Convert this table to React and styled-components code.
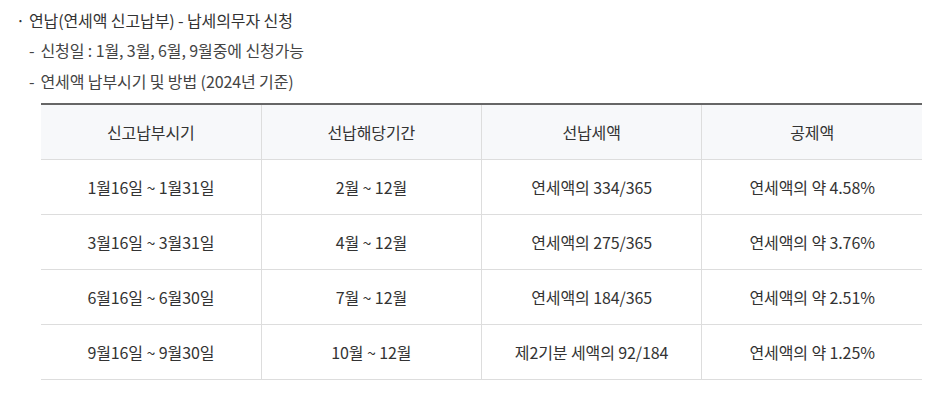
import React from "react";
import styled, { createGlobalStyle } from "styled-components";

const Global = createGlobalStyle`
  html, body { margin: 0; padding: 0; background: #fff; }
  body { font-family: "Noto Sans CJK KR", "Noto Sans", sans-serif; color: #333; }
`;

const Wrap = styled.div`
  padding: 5px 14px 0 16px;
`;

const Title = styled.div`
  display: flex;
  gap: 4px;
  font-size: 16px;
  line-height: 30px;
  color: #333;
  letter-spacing: -0.1px;
`;

const Sub = styled.div`
  display: flex;
  gap: 6px;
  padding-left: 13px;
  font-size: 16px;
  line-height: 31px;
  color: #444;
  letter-spacing: -0.1px;
`;

const Table = styled.table`
  margin: 6px 0 0 25px;
  width: 881px;
  border-collapse: collapse;
  table-layout: fixed;
  border-top: 2px solid #666;
  font-size: 16px;
  letter-spacing: -0.1px;
`;

const Th = styled.th`
  height: 54px;
  padding: 0;
  background: #f7f8fa;
  font-weight: 400;
  color: #333;
  border-bottom: 1px solid #ddd;
  border-left: ${p => (p.first ? "none" : "1px solid #ddd")};
`;

const Td = styled.td`
  height: 54px;
  padding: 0;
  text-align: center;
  color: #333;
  border-bottom: 1px solid #ddd;
  border-left: ${p => (p.first ? "none" : "1px solid #ddd")};
`;

const heads = ["신고납부시기", "선납해당기간", "선납세액", "공제액"];
const rows = [
  ["1월16일 ~ 1월31일", "2월 ~ 12월", "연세액의 334/365", "연세액의 약 4.58%"],
  ["3월16일 ~ 3월31일", "4월 ~ 12월", "연세액의 275/365", "연세액의 약 3.76%"],
  ["6월16일 ~ 6월30일", "7월 ~ 12월", "연세액의 184/365", "연세액의 약 2.51%"],
  ["9월16일 ~ 9월30일", "10월 ~ 12월", "제2기분 세액의 92/184", "연세액의 약 1.25%"],
];

export default function App() {
  return (
    <>
      <Global />
      <Wrap>
        <Title>
          <span>·</span>
          <span>연납(연세액 신고납부) - 납세의무자 신청</span>
        </Title>
        <Sub>
          <span>-</span>
          <span>신청일 : 1월, 3월, 6월, 9월중에 신청가능</span>
        </Sub>
        <Sub>
          <span>-</span>
          <span>연세액 납부시기 및 방법 (2024년 기준)</span>
        </Sub>
        <Table>
          <thead>
            <tr>
              {heads.map((h, i) => (
                <Th key={h} first={i === 0 ? 1 : 0}>{h}</Th>
              ))}
            </tr>
          </thead>
          <tbody>
            {rows.map((r, ri) => (
              <tr key={ri}>
                {r.map((c, i) => (
                  <Td key={i} first={i === 0 ? 1 : 0}>{c}</Td>
                ))}
              </tr>
            ))}
          </tbody>
        </Table>
      </Wrap>
    </>
  );
}
